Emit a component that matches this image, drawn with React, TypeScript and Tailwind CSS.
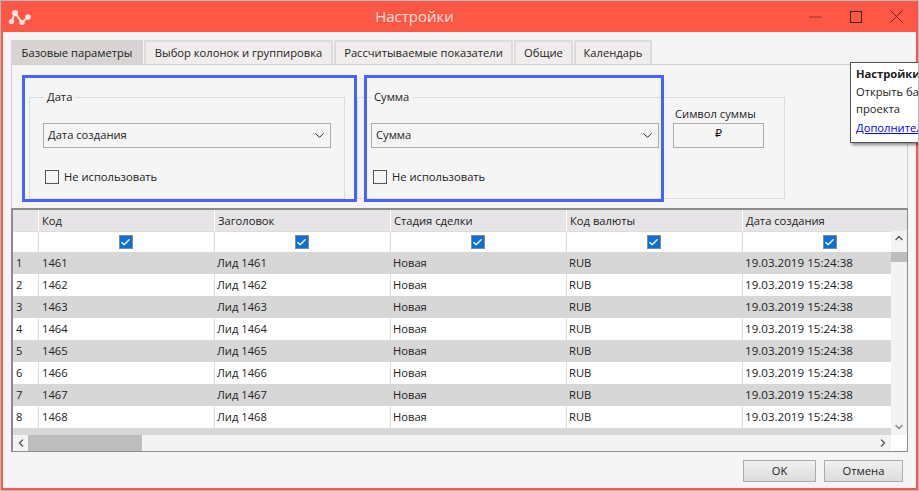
import { Check, ChevronDown, ChevronLeft, ChevronRight, ChevronUp } from "lucide-react";

const tabs = [
  { label: "Базовые параметры", width: "w-[132px]", active: true },
  { label: "Выбор колонок и группировка", width: "w-[189px]", active: false },
  { label: "Рассчитываемые показатели", width: "w-[179px]", active: false },
  { label: "Общие", width: "w-[59px]", active: false },
  { label: "Календарь", width: "w-[78px]", active: false },
];

const columns = ["Код", "Заголовок", "Стадия сделки", "Код валюты", "Дата создания"];
const rows = [1, 2, 3, 4, 5, 6, 7, 8, 9];
const gridCols = "grid grid-cols-[26px_176px_176px_176px_176px_176px]";
const font = "font-['Open_Sans','Noto_Sans',sans-serif]";

function Logo() {
  return (
    <svg width="32" height="32" viewBox="0 0 32 32" className="text-[#fde3df]">
      <polyline points="11.5,21.5 15,13 22,22.5 28,17" fill="none" stroke="currentColor" strokeWidth="2" />
      <circle cx="11.5" cy="21.5" r="2.6" fill="currentColor" />
      <circle cx="15" cy="13" r="3" fill="currentColor" />
      <circle cx="22" cy="22.5" r="2.6" fill="currentColor" />
      <circle cx="28" cy="17" r="2.8" fill="currentColor" />
    </svg>
  );
}

function Select({ label, className }: { label: string; className: string }) {
  return (
    <div className={`flex h-[25px] items-center justify-between border border-[#acacac] pl-[4px] pr-[3px] ${className}`}>
      <span>{label}</span>
      <ChevronDown size={15} strokeWidth={1.6} className="text-[#222]" />
    </div>
  );
}

function CheckRow({ className }: { className: string }) {
  return (
    <div className={`flex items-center gap-[5px] ${className}`}>
      <span className="h-[14px] w-[14px] border border-[#555]" />
      <span>Не использовать</span>
    </div>
  );
}

function GridCheck() {
  return (
    <span className="mr-[2px] flex h-[14px] w-[14px] items-center justify-center border border-[#8a8a8a] bg-[#0a6fd6]">
      <Check size={11} strokeWidth={3} className="text-white" />
    </span>
  );
}

export default function App() {
  return (
    <div className={`${font} relative flex h-[491px] w-[919px] flex-col overflow-hidden border border-[#b8b8b8] bg-[#ff5745] text-[11.2px] text-[#222]`}>
      <header className="relative flex h-[31px] shrink-0 items-center justify-center pr-[90px]">
        <div className="absolute -left-px -top-px">
          <Logo />
        </div>
        <span className="text-[15px] text-[#fde3df]">Настройки</span>
        <div className="absolute right-[15px] top-[9px] flex items-center gap-[28px]">
          <span className="h-[2px] w-[13px] bg-[#c2483a]" />
          <span className="h-[12px] w-[12px] border border-[#44211c]" />
          <svg width="13" height="13" viewBox="0 0 13 13" className="text-[#6b2d25]">
            <path d="M0.5 0.5 L12.5 12.5 M12.5 0.5 L0.5 12.5" stroke="currentColor" strokeWidth="1" />
          </svg>
        </div>
      </header>

      <main className="mb-[2px] ml-[2px] mr-[2px] flex-1 bg-[#f5f5f5] pl-[8px] pr-[8px] pt-[8px]">
        <nav className="flex h-[24px] gap-[1px]">
          {tabs.map((tab) => (
            <div
              key={tab.label}
              className={`flex items-center justify-center border-2 border-b-0 ${tab.width} ${
                tab.active ? "border-[#d8d4d4] bg-[#d8d4d4]" : "border-[#dcdcdc] bg-[#f1eded]"
              }`}
            >
              {tab.label}
            </div>
          ))}
        </nav>

        <section className="relative h-[144px] w-[897px] border-l border-r border-t border-[#cfcfcf] pl-[17px] pt-[25px]">
          <div className="flex gap-[12px]">
            <fieldset className="h-[109px] w-[316px] border border-[#dcdcdc] pl-[13px]">
              <legend className="ml-[1px] px-[3px] leading-[14px]">Дата</legend>
              <Select label="Дата создания" className="mt-[19px] w-[288px]" />
              <CheckRow className="ml-[2px] mt-[21px]" />
            </fieldset>
            <fieldset className="flex h-[109px] w-[428px] gap-[14px] border border-[#dcdcdc] pl-[13px]">
              <legend className="px-[3px] leading-[14px]">Сумма</legend>
              <div>
                <Select label="Сумма" className="mt-[19px] w-[288px]" />
                <CheckRow className="ml-[2px] mt-[21px]" />
              </div>
              <div>
                <div className="h-[19px] pl-[2px] leading-[19px]">Символ суммы</div>
                <div className="flex h-[25px] w-[91px] items-center justify-center border border-[#acacac] pb-[2px] font-['DejaVu_Sans',sans-serif] text-[11px] text-[#111]">
                  ₽
                </div>
              </div>
            </fieldset>
          </div>
          <div className="absolute left-[10px] top-[10px] h-[127px] w-[335px] border-[3px] border-[#4763ff]" />
          <div className="absolute left-[352px] top-[10px] h-[127px] w-[300px] border-[3px] border-[#4763ff]" />
        </section>

        <section className="flex h-[244px] w-[897px] flex-col border-2 border-[#8c8c8c] border-b-[1px] border-r-[1px] bg-white">
          <div className={`${gridCols} h-[21px] shrink-0 overflow-hidden bg-[#e6e4e6]`}>
            <div className="border-r border-white" />
            {columns.map((name) => (
              <div key={name} className="border-r border-white pl-[3px] leading-[21px]">
                {name}
              </div>
            ))}
          </div>
          <div className="flex min-h-0 flex-1">
            <div className="flex w-[878px] flex-col">
              <div className={`${gridCols} h-[21px] shrink-0 border-t border-[#dcdcdc] bg-white`}>
                <div className="border-r border-[#dcdcdc]" />
                {columns.map((name) => (
                  <div key={name} className="flex items-center justify-center border-r border-[#dcdcdc]">
                    <GridCheck />
                  </div>
                ))}
              </div>
              <div className="min-h-0 flex-1 overflow-hidden">
                {rows.map((n) => (
                  <div key={n} className={`${gridCols} h-[22px] leading-[22px] ${n % 2 === 1 ? "bg-[#d7d7d7]" : "bg-white"}`}>
                    <div className={`pl-[3px] ${n % 2 === 0 ? "border-r border-[#dcdcdc]" : ""}`}>{n}</div>
                    <div className={`pl-[3px] ${n % 2 === 0 ? "border-r border-[#dcdcdc]" : ""}`}>{1460 + n}</div>
                    <div className={`pl-[2px] ${n % 2 === 0 ? "border-r border-[#dcdcdc]" : ""}`}>Лид {1460 + n}</div>
                    <div className={`pl-[2px] ${n % 2 === 0 ? "border-r border-[#dcdcdc]" : ""}`}>Новая</div>
                    <div className={`pl-[2px] ${n % 2 === 0 ? "border-r border-[#dcdcdc]" : ""}`}>RUB</div>
                    <div className="pl-[2px] text-[11.6px]">19.03.2019 15:24:38</div>
                  </div>
                ))}
              </div>
              <div className="flex h-[16px] shrink-0 items-center bg-[#f3f3f3]">
                <div className="flex w-[15px] justify-center">
                  <ChevronLeft size={12} strokeWidth={3} className="text-[#606060]" />
                </div>
                <div className="h-[16px] w-[114px] bg-[#bdbdbd]" />
                <div className="flex-1" />
                <div className="flex w-[16px] justify-center">
                  <ChevronRight size={12} strokeWidth={3} className="text-[#606060]" />
                </div>
              </div>
            </div>
            <div className="flex w-[16px] flex-col bg-[#f3f3f3]">
              <div className="flex h-[21px] items-start justify-center pt-[1px]">
                <ChevronUp size={12} strokeWidth={3} className="text-[#606060]" />
              </div>
              <div className="h-[10px] bg-[#bdbdbd]" />
              <div className="flex-1" />
              <div className="flex h-[16px] items-center justify-center">
                <ChevronDown size={12} strokeWidth={3} className="text-[#8a8a8a]" />
              </div>
              <div className="h-[16px] bg-white" />
            </div>
          </div>
        </section>

        <footer className="flex justify-end gap-[8px] pr-[5px] pt-[8px]">
          <button type="button" className="h-[22px] w-[73px] border border-[#acacac] bg-gradient-to-b from-[#f0f0f0] to-[#dcdcdc]">
            OK
          </button>
          <button type="button" className="h-[22px] w-[79px] border border-[#acacac] bg-gradient-to-b from-[#f0f0f0] to-[#dcdcdc]">
            Отмена
          </button>
        </footer>
      </main>

      <aside className="absolute left-[849px] top-[61px] h-[81px] w-[90px] border border-[#555] bg-white pl-[5px] pt-[2px] shadow-[2px_2px_3px_rgba(0,0,0,0.45)]">
        <div className="font-bold leading-[18px]">Настройки</div>
        <div className="whitespace-nowrap leading-[17px]">Открыть базовые</div>
        <div className="leading-[17px]">проекта</div>
        <div className="mt-[2px] whitespace-nowrap leading-[17px] text-[#0000ee] underline">Дополнительно</div>
      </aside>
    </div>
  );
}
